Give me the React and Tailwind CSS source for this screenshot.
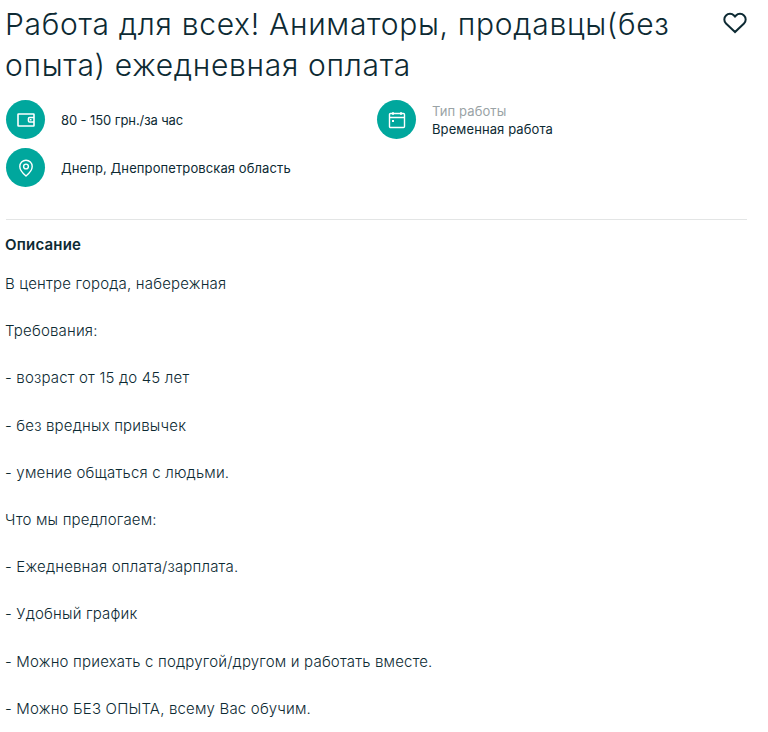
import React from 'react';

const LINES = [
  'В центре города, набережная',
  'Требования:',
  '- возраст от 15 до 45 лет',
  '- без вредных привычек',
  '- умение общаться с людьми.',
  'Что мы предлогаем:',
  '- Ежедневная оплата/зарплата.',
  '- Удобный график',
  '- Можно приехать с подругой/другом и работать вместе.',
  '- Можно БЕЗ ОПЫТА, всему Вас обучим.',
];

const Wallet = () => (
  <svg width="18" height="14" viewBox="0 0 18 14" fill="none" stroke="white" strokeWidth="1.6">
    <rect x="1" y="1" width="16" height="12" rx="0.5" />
    <path d="M17 4.500h-4.500a1 1 0 0 0-1 1v2.500a1 1 0 0 0 1 1H17" />
    <rect x="13" y="6" width="1.500" height="1.500" fill="white" stroke="none" />
  </svg>
);

const Calendar = () => (
  <svg width="18" height="18" viewBox="0 0 18 18" fill="none" stroke="white" strokeWidth="1.4">
    <rect x="1.500" y="2.500" width="15" height="14" rx="1" />
    <path d="M1.500 6.500h15M5 1v3M13 1v3" />
    <rect x="4" y="9" width="2" height="2" fill="white" stroke="none" />
  </svg>
);

const Pin = () => (
  <svg width="16" height="18" viewBox="0 0 16 18" fill="none" stroke="white" strokeWidth="1.4">
    <path d="M8 17C5 14.500 1.800 11.500 1.800 7.500a6.200 6.200 0 0 1 12.400 0C14.200 11.500 11 14.500 8 17Z" />
    <circle cx="8" cy="7.500" r="2.400" />
  </svg>
);

const Circle = ({ children }) => (
  <div className="w-[39px] h-[39px] rounded-full bg-[#00a79d] flex items-center justify-center shrink-0">
    {children}
  </div>
);

export default function App() {
  return (
    <div className="min-h-[732px] bg-white overflow-hidden pl-[6px] pr-[21px] text-[#0d2a33] font-['Inter',sans-serif]">
      <div className="flex justify-between items-start pt-[4px]">
        <h1 className="w-[700px] text-[30px] leading-[41px] font-light tracking-[0.7px] -ml-[1px]">
          Работа для всех! Аниматоры, продавцы(без опыта) ежедневная оплата
        </h1>
        <svg className="mt-[8px]" width="24" height="22" viewBox="0 0 24 22" fill="none" stroke="#0d2a33" strokeWidth="2">
          <path d="M12 20 3 11.500a5.600 5.600 0 0 1 0-8 5.500 5.500 0 0 1 8 0l1 1.100 1-1.100a5.500 5.500 0 0 1 8 0 5.600 5.600 0 0 1 0 8Z" />
        </svg>
      </div>

      <div className="mt-[14px] grid grid-cols-[371px_1fr] gap-y-[9px] text-[13px] leading-[18px] tracking-[0.1px]">
        <div className="flex items-center gap-[16px]">
          <Circle><Wallet /></Circle>
          <span className="tracking-[-0.1px]">80 - 150 грн./за час</span>
        </div>
        <div className="flex items-center gap-[16px]">
          <Circle><Calendar /></Circle>
          <div>
            <div className="text-[#9aa3a6]">Тип работы</div>
            <div>Временная работа</div>
          </div>
        </div>
        <div className="flex items-center gap-[16px]">
          <Circle><Pin /></Circle>
          <span>Днепр, Днепропетровская область</span>
        </div>
      </div>

      <div className="mt-[32px] h-px bg-[#e3e5e5]" />

      <h2 className="mt-[15px] text-[15px] leading-[20px] font-semibold tracking-[0.2px] -ml-[1px]">Описание</h2>

      <div className="mt-[17px] text-[15px] leading-[24px] font-light tracking-[0.18px] -ml-[1px] flex flex-col gap-[23.200px]">
        {LINES.map((line) => (
          <p key={line}>{line}</p>
        ))}
      </div>
    </div>
  );
}
